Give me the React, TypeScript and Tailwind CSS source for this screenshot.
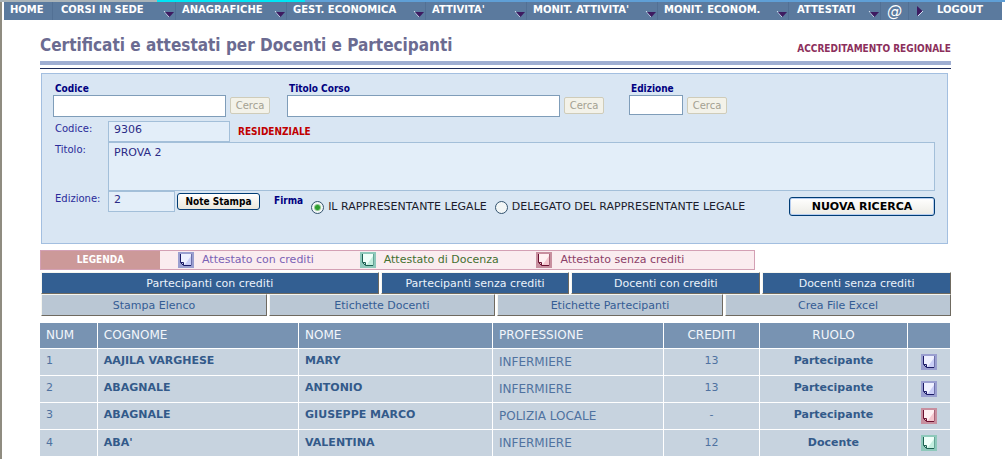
import { clsx } from "clsx";

type NoteKind = "crediti" | "docenza" | "senza";

const NOTE_COLORS: Record<NoteKind, { frame: string; light: string; shade: string; ink: string }> = {
  crediti: { frame: "#9a9fd0", light: "#eef0ff", shade: "#c9cdf6", ink: "#1b1a66" },
  docenza: { frame: "#8ec9bb", light: "#effff9", shade: "#c3eedf", ink: "#1c6152" },
  senza: { frame: "#c88f9f", light: "#fff0f2", shade: "#f4c6ce", ink: "#6b1030" },
};

function NoteIcon({ kind }: { kind: NoteKind }) {
  const c = NOTE_COLORS[kind];
  return (
    <svg width="16" height="16" viewBox="0 0 16 16" className="block shrink-0" aria-hidden="true">
      <rect width="16" height="16" fill={c.frame} />
      <path d="M3 2H13V13H6L3 10Z" fill={c.light} />
      <path d="M13 4V13H6L8 11Z" fill={c.shade} />
      <path d="M2.5 2V10.5L5.5 13.5H13" fill="none" stroke={c.ink} />
      <path d="M3 10.500H5.500V13" fill="none" stroke={c.ink} />
      <path d="M13.5 2V13.5" stroke={c.ink} opacity="0.35" />
    </svg>
  );
}

const MENU = [
  { label: "HOME", width: "basis-[49px]", pad: "pl-1.5", arrow: false },
  { label: "CORSI IN SEDE", width: "basis-[123px]", pad: "pl-2", arrow: true },
  { label: "ANAGRAFICHE", width: "basis-[111px]", pad: "pl-1.5", arrow: true },
  { label: "GEST. ECONOMICA", width: "basis-[139px]", pad: "pl-1.5", arrow: true },
  { label: "ATTIVITA'", width: "basis-[101px]", pad: "pl-1.5", arrow: true },
  { label: "MONIT. ATTIVITA'", width: "basis-[131px]", pad: "pl-1.5", arrow: true },
  { label: "MONIT. ECONOM.", width: "basis-[131px]", pad: "pl-1.5", arrow: true },
  { label: "ATTESTATI", width: "basis-[92px]", pad: "pl-2", arrow: true },
];

function MenuBar() {
  return (
    <nav className="mr-[3px] ml-1 flex h-[18px] bg-[#5b7a9e] text-[10px] font-bold text-white">
      {MENU.map((item) => (
        <a
          key={item.label}
          href="#"
          className={clsx(
            "flex shrink grow justify-between whitespace-nowrap border-r border-[#527094] leading-4",
            item.width,
            item.pad,
          )}
        >
          {item.label}
          {item.arrow && (
            <svg width="12" height="8" viewBox="0 0 12 8" className="mb-0.5 self-end" aria-hidden="true">
              <path d="M1 1L6 7" stroke="#d5def0" />
              <path d="M2 2H11L6.500 7Z" fill="#3d1a60" />
            </svg>
          )}
        </a>
      ))}
      <a href="#" className="flex basis-[28px] grow items-center justify-center border-r border-[#527094] text-[15px] font-normal italic leading-4">
        @
      </a>
      <a href="#" className="flex basis-[93px] grow items-start gap-3.5 pl-2 leading-4">
        <svg width="6" height="10" viewBox="0 0 6 10" className="mt-1" aria-hidden="true">
          <path d="M0 0L5.500 5L0 10Z" fill="#3d1a60" />
          <path d="M1 10L6 5" stroke="#d5def0" />
        </svg>
        LOGOUT
      </a>
    </nav>
  );
}

const SMALL_BOLD = "font-['DejaVu_Sans_Condensed','DejaVu_Sans',sans-serif] text-[10px] font-bold";
const READ_BOX = "block border border-[#a3bfd9] bg-[#e3eef9] px-[5px] text-[11px] text-[#2b2b86]";

function SearchField({ id, label, inputClass }: { id: string; label: string; inputClass: string }) {
  return (
    <div>
      <label htmlFor={id} className={clsx(SMALL_BOLD, "block pl-0.5 leading-3 text-[#000080]")}>
        {label}
      </label>
      <div className="flex items-start gap-1">
        <input id={id} type="text" className={clsx("border border-[#7f9db9] bg-white px-1 text-[11px]", inputClass)} />
        <button
          type="button"
          disabled
          className="mt-0.5 h-[17px] w-10 rounded-xs border border-[#cfccb9] bg-[#f3f2e9] text-[10px] leading-3 text-[#a3a192]"
        >
          Cerca
        </button>
      </div>
    </div>
  );
}

function FirmaOption({ label, checked }: { label: string; checked?: boolean }) {
  return (
    <label className="flex items-center gap-1 text-[11px] leading-4 whitespace-nowrap text-[#1c1c2c]">
      <input
        type="radio"
        name="firma"
        defaultChecked={checked}
        className="size-[13px] appearance-none rounded-full border border-[#33536f] bg-[#f2f6f6] checked:bg-[radial-gradient(#2f9e2f_0_2px,#f2f6f6_4px)]"
      />
      {label}
    </label>
  );
}

function CoursePanel() {
  return (
    <form className="mr-[3px] ml-px flex h-[171px] flex-col border border-[#a3bfe0] bg-[#d9e6f3] pt-[9px] pr-3 pl-[11px]">
      <div className="flex gap-[17px]">
        <SearchField id="cerca-codice" label="Codice" inputClass="h-[22px] w-[173px]" />
        <SearchField id="cerca-titolo" label="Titolo Corso" inputClass="h-[22px] w-[273px]" />
        <div className="pl-2">
          <SearchField id="cerca-edizione" label="Edizione" inputClass="h-5 w-[54px]" />
        </div>
      </div>

      <div className="mt-1 grid grid-cols-[55px_1fr] text-[10px] text-[#2b2b9a]">
        <label htmlFor="codice" className="pl-0.5 leading-4">Codice:</label>
        <div className="flex items-center gap-2">
          <input id="codice" readOnly value="9306" className={clsx(READ_BOX, "h-[21px] w-[122px] pb-1")} />
          <span className={clsx(SMALL_BOLD, "text-[#c00000]")}>RESIDENZIALE</span>
        </div>

        <label htmlFor="titolo" className="pl-0.5 leading-4">Titolo:</label>
        <textarea id="titolo" readOnly value="PROVA 2" className={clsx(READ_BOX, "h-[49px] w-full resize-none py-0.5 leading-4")} />

        <label htmlFor="edizione" className="pl-0.5 leading-4">Edizione:</label>
        <div className="flex items-start">
          <input id="edizione" readOnly value="2" className={clsx(READ_BOX, "h-[21px] w-[67px] pb-1")} />
          <button
            type="button"
            className={clsx(SMALL_BOLD, "mt-0.5 ml-0.5 h-[17px] w-[83px] rounded-[3px] border border-[#003c74] bg-linear-to-b from-white to-[#e9e7dc] leading-3 text-black")}
          >
            Note Stampa
          </button>
          <fieldset className="ml-3.5 flex">
            <legend className={clsx(SMALL_BOLD, "float-left mr-2 leading-5 text-[#000080]")}>Firma</legend>
            <div className="flex gap-2 pt-2">
              <FirmaOption label="IL RAPPRESENTANTE LEGALE" checked />
              <FirmaOption label="DELEGATO DEL RAPPRESENTANTE LEGALE" />
            </div>
          </fieldset>
          <button
            type="button"
            className="mt-1.5 ml-auto h-[19px] w-[146px] rounded-[3px] border border-[#003c74] bg-linear-to-b from-white to-[#ecebe4] text-[11px] leading-4 font-bold text-black shadow-[inset_0_0_0_1px_#b5cdf0]"
          >
            NUOVA RICERCA
          </button>
        </div>
      </div>
    </form>
  );
}

const ACTION =
  "h-[22px] border border-t-[#f6f6f0] border-l-[#f6f6f0] border-r-[#6f6a60] border-b-[#6f6a60] pt-px text-[11px] leading-4 whitespace-nowrap";

function Actions() {
  return (
    <div className="mt-0.5 ml-px">
      <div className="grid grid-cols-[338fr_189fr_189fr_189fr] gap-x-0.5">
        {["Partecipanti con crediti", "Partecipanti senza crediti", "Docenti con crediti", "Docenti senza crediti"].map((t) => (
          <button key={t} type="button" className={clsx(ACTION, "bg-[#335f92] text-[#eaf2fb]")}>
            {t}
          </button>
        ))}
      </div>
      <div className="grid grid-cols-4 gap-x-0.5">
        {["Stampa Elenco", "Etichette Docenti", "Etichette Partecipanti", "Crea File Excel"].map((t) => (
          <button key={t} type="button" className={clsx(ACTION, "bg-[#bac7d4] text-[#355d94]")}>
            {t}
          </button>
        ))}
      </div>
    </div>
  );
}

const ROWS: { cognome: string; nome: string; professione: string; crediti: string; ruolo: string; kind: NoteKind }[] = [
  { cognome: "AAJILA VARGHESE", nome: "MARY", professione: "INFERMIERE", crediti: "13", ruolo: "Partecipante", kind: "crediti" },
  { cognome: "ABAGNALE", nome: "ANTONIO", professione: "INFERMIERE", crediti: "13", ruolo: "Partecipante", kind: "crediti" },
  { cognome: "ABAGNALE", nome: "GIUSEPPE MARCO", professione: "POLIZIA LOCALE", crediti: "-", ruolo: "Partecipante", kind: "senza" },
  { cognome: "ABA'", nome: "VALENTINA", professione: "INFERMIERE", crediti: "12", ruolo: "Docente", kind: "docenza" },
];

function PeopleTable() {
  return (
    <table className="mt-[7px] w-full table-fixed border-collapse text-left text-[11px] text-[#4f72a0]">
      <colgroup>
        <col className="w-[6.3%]" />
        <col className="w-[22.1%]" />
        <col className="w-[21.3%]" />
        <col className="w-[18.8%]" />
        <col className="w-[10.5%]" />
        <col className="w-[16.3%]" />
        <col className="w-[4.7%]" />
      </colgroup>
      <thead>
        <tr className="h-[25px] bg-[#7893b2] text-[12px] leading-4 text-[#f2f6fb] [&>th]:border-r [&>th]:border-white [&>th]:px-1.5 [&>th]:font-normal">
          <th>NUM</th>
          <th>COGNOME</th>
          <th>NOME</th>
          <th>PROFESSIONE</th>
          <th className="text-center">CREDITI</th>
          <th className="text-center">RUOLO</th>
          <th aria-label="Attestato" />
        </tr>
      </thead>
      <tbody>
        {ROWS.map((r, i) => (
          <tr key={i} className="h-[27px] border-t border-white bg-[#c7d3df] [&>td]:border-r [&>td]:border-white [&>td]:px-1.5">
            <td>{i + 1}</td>
            <td className="font-bold text-[#335a8a]">{r.cognome}</td>
            <td className="font-bold text-[#335a8a]">{r.nome}</td>
            <td className="text-[12px] leading-4">{r.professione}</td>
            <td className="text-center">{r.crediti}</td>
            <td className="text-center font-bold text-[#335a8a]">{r.ruolo}</td>
            <td>
              <a href="#" aria-label="Attestato" className="flex justify-center">
                <NoteIcon kind={r.kind} />
              </a>
            </td>
          </tr>
        ))}
      </tbody>
    </table>
  );
}

export default function App() {
  return (
    <div className="min-h-screen border-l-2 border-[#8f8c80] bg-white font-['DejaVu_Sans',Verdana,sans-serif]">
      <div className="-ml-0.5">
        <div className="flex h-0.5">
          <div className="w-[157px] bg-[#a9b3b8]" />
          <div className="w-[148px] bg-[#00e5f5]" />
          <div className="grow bg-[#5f9fd6]" />
        </div>
        <MenuBar />

        <main className="mr-[54px] ml-10">
          <div className="flex h-[45px] items-end justify-between border-b-4 border-[#a0afd2] pb-1.5">
            <h1 className="font-['DejaVu_Sans_Condensed','DejaVu_Sans',sans-serif] text-[17px] leading-5 font-bold whitespace-nowrap text-[#6b6b91]">
              Certificati e attestati per Docenti e Partecipanti
            </h1>
            <span className={clsx(SMALL_BOLD, "leading-3 text-[#8c2f5c]")}>ACCREDITAMENTO REGIONALE</span>
          </div>
          <div className="mt-[3px] mb-1 h-px bg-[#1c2a58]" />

          <CoursePanel />

          <div className="mt-1.5 mr-[196px] flex h-5 border border-[#d3a0b4] bg-[#faecef] text-[11px] leading-[18px]">
            <div className="flex w-[119px] items-center justify-center bg-[#cc9999] text-white">
              <span className={SMALL_BOLD}>LEGENDA</span>
            </div>
            <div className="grid grow grid-cols-[182fr_177fr_218fr] pl-[18px]">
              <span className="flex items-center gap-2 text-[#7a62b5]">
                <NoteIcon kind="crediti" />
                Attestato con crediti
              </span>
              <span className="flex items-center gap-2 text-[#44702f]">
                <NoteIcon kind="docenza" />
                Attestato di Docenza
              </span>
              <span className="flex items-center gap-2 text-[#8c3f68]">
                <NoteIcon kind="senza" />
                Attestato senza crediti
              </span>
            </div>
          </div>

          <Actions />
          <PeopleTable />
        </main>
      </div>
    </div>
  );
}
